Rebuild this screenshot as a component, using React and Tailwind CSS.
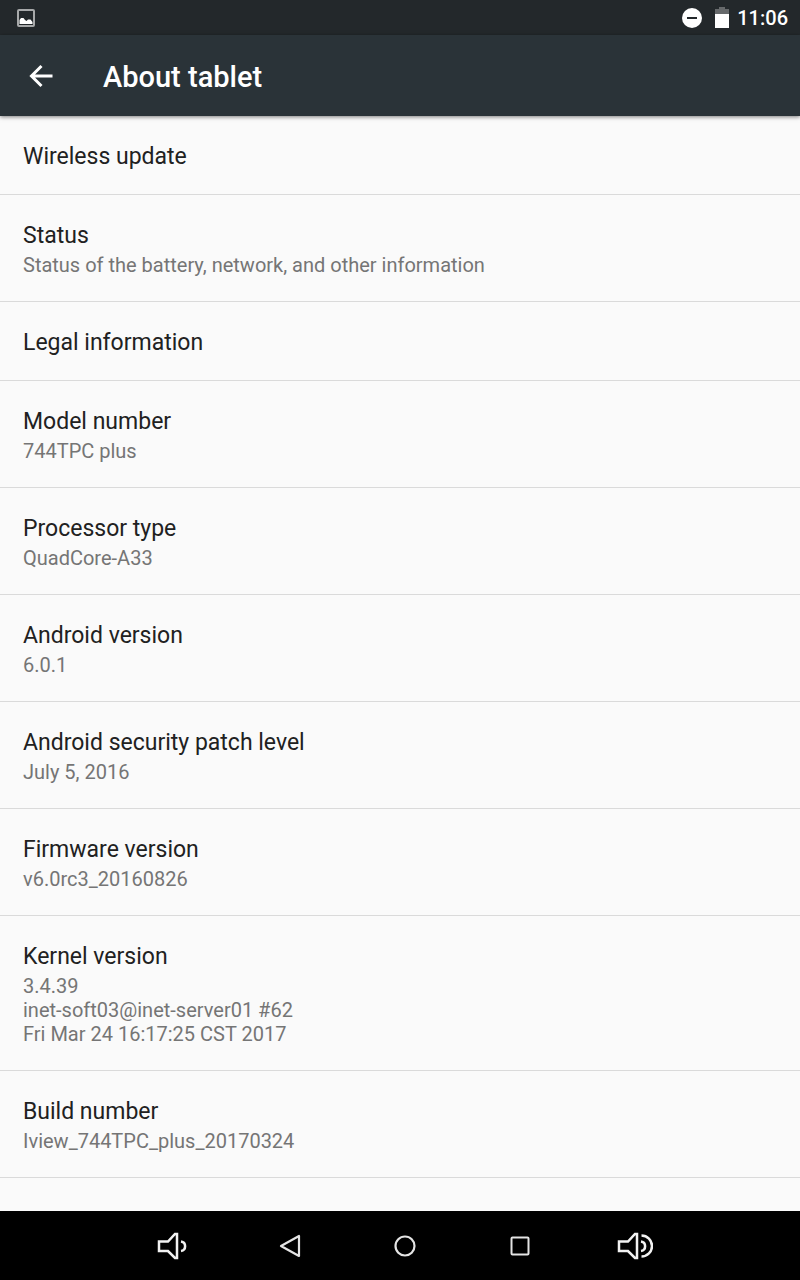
import React from 'react'

const items = [
  { title: 'Wireless update' },
  { title: 'Status', summary: ['Status of the battery, network, and other information'] },
  { title: 'Legal information' },
  { title: 'Model number', summary: ['744TPC plus'] },
  { title: 'Processor type', summary: ['QuadCore-A33'] },
  { title: 'Android version', summary: ['6.0.1'] },
  { title: 'Android security patch level', summary: ['July 5, 2016'] },
  { title: 'Firmware version', summary: ['v6.0rc3_20160826'] },
  {
    title: 'Kernel version',
    summary: ['3.4.39', 'inet-soft03@inet-server01 #62', 'Fri Mar 24 16:17:25 CST 2017'],
  },
  { title: 'Build number', summary: ['Iview_744TPC_plus_20170324'] },
]

function StatusBar() {
  return (
    <div className="flex h-[35px] items-center justify-between bg-[#23282b] pl-[17px] pr-3 text-white">
      <svg width="18" height="18" viewBox="0 0 18 18" aria-hidden="true">
        <rect x="1" y="1" width="16" height="16" rx="1" fill="none" stroke="#a7a9aa" strokeWidth="2" />
        <path d="M2.5 15v-4L4 9h2.5L8 11l1.5 1 1.5-1.5h2.5l2 2.5v2z" fill="#fff" />
      </svg>
      <div className="flex items-center">
        <svg width="20" height="20" viewBox="0 0 20 20" className="mr-[13px]" aria-hidden="true">
          <circle cx="10" cy="10" r="10" fill="#fff" />
          <rect x="5" y="9" width="10" height="2" fill="#23282b" />
        </svg>
        <svg width="14" height="21" viewBox="0 0 14 21" className="mr-2" aria-hidden="true">
          <path d="M4 0h6v2h4v5H0V2h4z" fill="#66696b" />
          <rect y="7" width="14" height="14" fill="#fff" />
        </svg>
        <span className="text-[20px] font-medium leading-6">11:06</span>
      </div>
    </div>
  )
}

function Header() {
  return (
    <header className="relative flex h-[81px] items-center bg-[#2a3338] text-white shadow-[0_1px_4px_rgba(0,0,0,0.5)]">
      <button type="button" aria-label="Back" className="flex h-full w-[82px] items-center justify-center">
        <svg width="24" height="24" viewBox="0 0 24 24" fill="none" stroke="#fff" strokeWidth="3" aria-hidden="true">
          <path d="M12.5 2l-10 10 10 10M2.5 12h21" />
        </svg>
      </button>
      <h1 className="ml-[21px] pt-0.5 text-[29px] font-medium leading-9">About tablet</h1>
    </header>
  )
}

function PreferenceItem({ title, summary }) {
  return (
    <li className="border-b border-[#dadada]">
      <button type="button" className="block w-full px-[23px] pt-[26px] pb-[22px] text-left">
        <span className="block text-[23px] leading-[30px] text-[#212121]">{title}</span>
        {summary && (
          <span className="block py-0.5 text-[20px] leading-6 text-[#757575]">
            {summary.map((line) => (
              <span key={line} className="block">{line}</span>
            ))}
          </span>
        )}
      </button>
    </li>
  )
}

function NavButton({ label, children }) {
  return (
    <button type="button" aria-label={label} className="flex flex-1 items-center justify-center">
      {children}
    </button>
  )
}

function VolumeIcon({ loud }) {
  return (
    <svg width="36" height="28" viewBox="0 0 36 28" fill="none" stroke="#f2f2f2" strokeWidth="2.5" aria-hidden="true">
      <path d="M2 9.5h9L18 2h2v24h-2l-7-7H2z" />
      <path d="M24 9.5a4.8 4.8 0 0 1 0 9.5" />
      {loud && <path d="M24.5 3.5a10.5 10.5 0 0 1 0 21" />}
    </svg>
  )
}

function NavigationBar() {
  return (
    <nav className="flex h-[69px] bg-black pl-[117px] pr-[108px]">
      <NavButton label="Volume down">
        <VolumeIcon />
      </NavButton>
      <NavButton label="Back">
        <svg width="22" height="24" viewBox="0 0 22 24" fill="none" stroke="#e4e4e4" strokeWidth="2.2" strokeLinejoin="round" aria-hidden="true">
          <path d="M20 2v20L2 12z" />
        </svg>
      </NavButton>
      <NavButton label="Home">
        <svg width="22" height="22" viewBox="0 0 22 22" fill="none" stroke="#e4e4e4" strokeWidth="2.2" aria-hidden="true">
          <circle cx="11" cy="11" r="9.5" />
        </svg>
      </NavButton>
      <NavButton label="Recent apps">
        <svg width="20" height="20" viewBox="0 0 20 20" fill="none" stroke="#e4e4e4" strokeWidth="2" aria-hidden="true">
          <rect x="1.5" y="1.5" width="17" height="17" rx="1" />
        </svg>
      </NavButton>
      <NavButton label="Volume up">
        <VolumeIcon loud />
      </NavButton>
    </nav>
  )
}

export default function App() {
  return (
    <div className="flex min-h-screen flex-col bg-[#fafafa] font-[Roboto,sans-serif]">
      <StatusBar />
      <Header />
      <main className="flex-1">
        <ul>
          {items.map((item) => (
            <PreferenceItem key={item.title} title={item.title} summary={item.summary} />
          ))}
        </ul>
      </main>
      <NavigationBar />
    </div>
  )
}
